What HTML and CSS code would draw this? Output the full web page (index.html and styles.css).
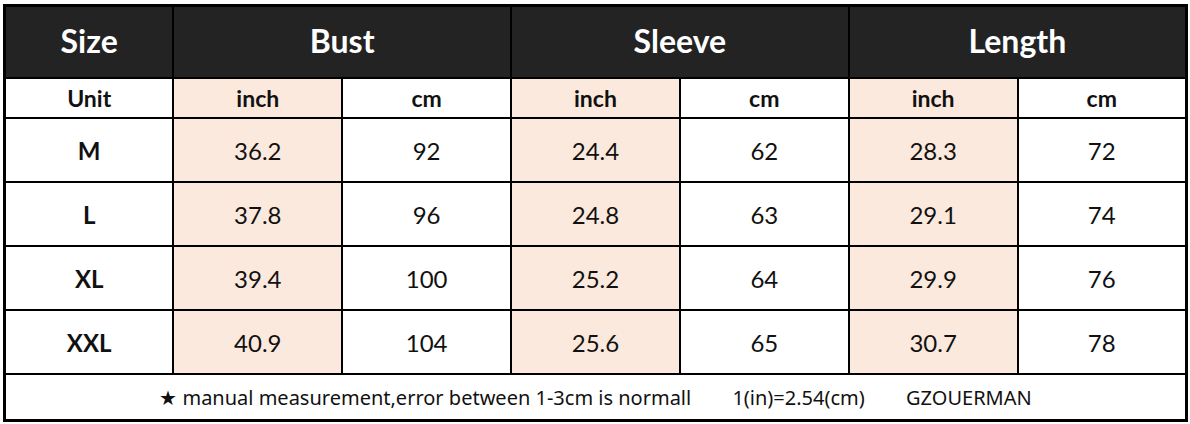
FILE: index.html
```html
<!DOCTYPE html>
<html lang="en">
<head>
    <meta charset="UTF-8">
    <meta name="viewport" content="width=device-width, initial-scale=1.0">
    <title>Size Chart</title>
    <link rel="stylesheet" href="styles.css">
</head>
<body>
    <table class="chart">
        <colgroup>
            <col class="col">
            <col class="col">
            <col class="col">
            <col class="col">
            <col class="col">
            <col class="col">
            <col class="col">
        </colgroup>
        <tr class="head">
            <th>Size</th>
            <th colspan="2">Bust</th>
            <th colspan="2">Sleeve</th>
            <th colspan="2">Length</th>
        </tr>
        <tr class="units">
            <td>Unit</td>
            <td class="inch">inch</td>
            <td>cm</td>
            <td class="inch">inch</td>
            <td>cm</td>
            <td class="inch">inch</td>
            <td>cm</td>
        </tr>
        <tr class="row">
            <td class="size">M</td>
            <td class="inch">36.2</td><td>92</td>
            <td class="inch">24.4</td><td>62</td>
            <td class="inch">28.3</td><td>72</td>
        </tr>
        <tr class="row">
            <td class="size">L</td>
            <td class="inch">37.8</td><td>96</td>
            <td class="inch">24.8</td><td>63</td>
            <td class="inch">29.1</td><td>74</td>
        </tr>
        <tr class="row">
            <td class="size">XL</td>
            <td class="inch">39.4</td><td>100</td>
            <td class="inch">25.2</td><td>64</td>
            <td class="inch">29.9</td><td>76</td>
        </tr>
        <tr class="row">
            <td class="size">XXL</td>
            <td class="inch">40.9</td><td>104</td>
            <td class="inch">25.6</td><td>65</td>
            <td class="inch">30.7</td><td>78</td>
        </tr>
        <tr class="note">
            <td colspan="7">
                <span>★ manual measurement,error between 1-3cm is normall</span>
                <span>1(in)=2.54(cm)</span>
                <span>GZOUERMAN</span>
            </td>
        </tr>
    </table>
</body>
</html>
```

FILE: styles.css
```css
body {
    margin: 4px 2px 0 3px;
    background-color: #ffffff;
}
.chart {
    width: 1185px;
    border-collapse: collapse;
    table-layout: fixed;
    border: 3px solid #000000;
    font-family: Lato, "Open Sans", sans-serif;
    color: #111111;
}
.chart th,
.chart td {
    border: 2px solid #000000;
    text-align: center;
    padding: 0;
}
.head th {
    height: 67px;
    padding-bottom: 3px;
    background-color: #232323;
    color: #ffffff;
    font-size: 32px;
    font-weight: 700;
}
.units td {
    height: 38px;
    font-size: 23px;
    font-weight: 700;
}
.row td {
    height: 62px;
    font-size: 24px;
}
.row .size {
    font-weight: 700;
}
.inch {
    background-color: #fce9dd;
}
.note td {
    height: 44px;
    font-family: "Noto Sans", "Open Sans", sans-serif;
    font-size: 20px;
    color: #111111;
}
.note span {
    margin: 0 18px;
}
```
